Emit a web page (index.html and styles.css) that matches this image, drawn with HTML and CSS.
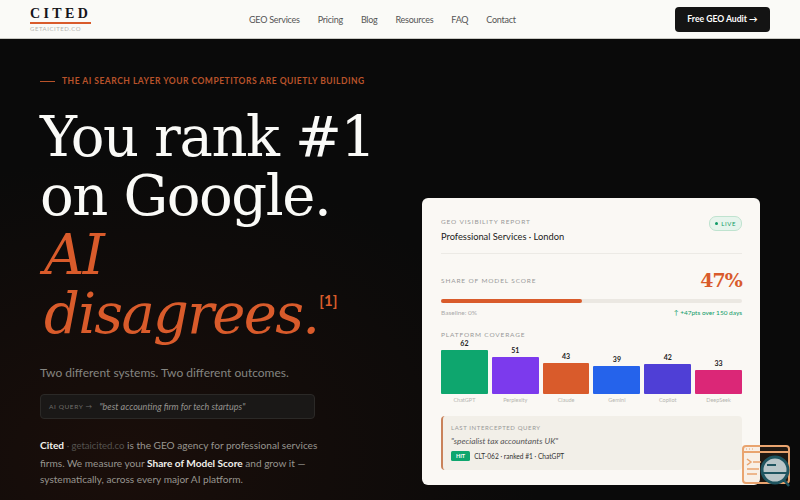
FILE: index.html
```html
<!DOCTYPE html>
<html lang="en">
<head>
    <meta charset="UTF-8">
    <meta name="viewport" content="width=device-width, initial-scale=1.0">
    <title>Cited - GEO Agency</title>
    <link rel="stylesheet" href="styles.css">
</head>
<body>
    <div class="header">
        <div class="logo">
            <div class="logo-name">CITED</div>
            <div class="logo-url">GETAICITED.CO</div>
        </div>
        <div class="nav">
            <a href="#">GEO Services</a>
            <a href="#">Pricing</a>
            <a href="#">Blog</a>
            <a href="#">Resources</a>
            <a href="#">FAQ</a>
            <a href="#">Contact</a>
        </div>
        <a class="cta" href="#">Free GEO Audit →</a>
    </div>
    <div class="hero">
        <div class="hero-left">
            <div class="eyebrow"><span class="eyebrow-line"></span>THE AI SEARCH LAYER YOUR COMPETITORS ARE QUIETLY BUILDING</div>
            <h1>You rank #1<br>on Google.<em>AI<br>disagrees.<sup>[1]</sup></em></h1>
            <p class="sub">Two different systems. Two different outcomes.</p>
            <div class="query">
                <span class="query-label">AI QUERY →</span>
                <span class="query-text">"best accounting firm for tech startups"</span>
            </div>
            <p class="intro"><strong>Cited</strong> <span class="intro-url">· getaicited.co</span> is the GEO agency for professional services firms. We measure your <strong>Share of Model Score</strong> and grow it — systematically, across every major AI platform.</p>
        </div>
        <div class="card">
            <div class="card-top">
                <div>
                    <div class="card-label">GEO VISIBILITY REPORT</div>
                    <div class="card-title">Professional Services · London</div>
                </div>
                <span class="live"><span class="live-dot"></span>LIVE</span>
            </div>
            <div class="score-row">
                <span class="card-label">SHARE OF MODEL SCORE</span>
                <span class="score">47%</span>
            </div>
            <div class="track"><div class="fill" style="width: 47%"></div></div>
            <div class="track-notes">
                <span>Baseline: 0%</span>
                <span class="gain">↑ +47pts over 150 days</span>
            </div>
            <div class="card-label coverage">PLATFORM COVERAGE</div>
            <div class="bars">
                <div class="bar-col"><b>62</b><div class="bar" style="height: 44px; background: #0ea66e"></div><span>ChatGPT</span></div>
                <div class="bar-col"><b>51</b><div class="bar" style="height: 37px; background: #7c3aed"></div><span>Perplexity</span></div>
                <div class="bar-col"><b>43</b><div class="bar" style="height: 31px; background: #d95b2b"></div><span>Claude</span></div>
                <div class="bar-col"><b>39</b><div class="bar" style="height: 28px; background: #2563eb"></div><span>Gemini</span></div>
                <div class="bar-col"><b>42</b><div class="bar" style="height: 30px; background: #4f3fd6"></div><span>Copilot</span></div>
                <div class="bar-col"><b>33</b><div class="bar" style="height: 24px; background: #db2777"></div><span>DeepSeek</span></div>
            </div>
            <div class="last">
                <div class="card-label last-label">LAST INTERCEPTED QUERY</div>
                <div class="last-query">"specialist tax accountants UK"</div>
                <div class="last-row"><span class="hit">HIT</span>CLT-062 · ranked #1 · ChatGPT</div>
            </div>
        </div>
    </div>
    <!-- floating widget -->
    <svg class="widget" width="50" height="44" viewBox="0 0 50 44" fill="none">
        <rect x="2" y="2" width="46" height="37" rx="3" fill="#e9a46f" fill-opacity="0.1" stroke="#e9a46f" stroke-width="2"/>
        <path d="M2 8h46" stroke="#e9a46f" stroke-width="2"/>
        <path d="M5 5h1M8 5h1M11 5h1" stroke="#e9a46f"/>
        <path d="M6 15l4 3-4 3M12 18h8M6 25h12M6 30h10" stroke="#e9a46f" stroke-width="1.5"/>
        <circle cx="34" cy="26" r="13" fill="#b9c6c8" stroke="#1f5560" stroke-width="3"/>
        <path d="M26 21h9M22 29h24" stroke="#1f5560" stroke-width="2"/>
        <path d="M43 36l5 6" stroke="#1f5560" stroke-width="2.5"/>
    </svg>
</body>
</html>
```

FILE: styles.css
```css
/* Global styles */
html, body {
    height: 100%;
}
body {
    margin: 0;
    font-family: 'Lato', sans-serif;
    background: #0a0a0a;
    overflow: hidden;
    position: relative;
}

/* Header */
.header {
    height: 39px;
    box-sizing: border-box;
    background: #fafaf7;
    border-bottom: 1px solid #c9c9c4;
    display: flex;
    align-items: center;
    padding: 0 30px;
}
.logo {
    width: 170px;
    padding-top: 2px;
}
.logo-name {
    font-family: 'Liberation Serif', serif;
    font-weight: 700;
    font-size: 14px;
    line-height: 13px;
    letter-spacing: 3.4px;
    color: #15151a;
    border-bottom: 2px solid #d95b2b;
    width: 61px;
    padding-bottom: 2px;
}
.logo-url {
    font-size: 6px;
    line-height: 9px;
    letter-spacing: 0.55px;
    color: #b5b5b0;
}
.nav {
    display: flex;
    gap: 18px;
    margin-left: 49px;
}
.nav a {
    font-size: 9px;
    letter-spacing: -0.25px;
    color: #555;
    text-decoration: none;
}
.cta {
    margin-left: auto;
    background: #141414;
    color: #fff;
    font-size: 8.6px;
    font-weight: 700;
    text-decoration: none;
    border-radius: 4px;
    width: 95px;
    height: 25px;
    display: flex;
    align-items: center;
    justify-content: center;
}

/* Hero */
.hero {
    height: 461px;
    padding: 0 40px;
    display: flex;
    justify-content: space-between;
    background: radial-gradient(ellipse 420px 300px at 120px 420px, #1a0e0a, transparent);
}
.hero-left {
    width: 345px;
    padding-top: 37px;
}
.eyebrow {
    display: flex;
    align-items: center;
    gap: 7px;
    font-size: 8.5px;
    font-weight: 700;
    letter-spacing: 0.5px;
    color: #b9532a;
    white-space: nowrap;
}
.eyebrow-line {
    width: 15px;
    height: 1px;
    background: #b9532a;
}
h1 {
    margin: 21px 0 0;
    font-family: 'DejaVu Serif', serif;
    font-weight: 400;
    font-size: 56px;
    line-height: 59px;
    letter-spacing: -1.4px;
    color: #fafaf7;
    white-space: nowrap;
}
h1 em {
    display: block;
    padding-left: 4px;
    letter-spacing: -1.7px;
    color: #d95b2b;
}
h1 sup {
    font-family: 'Lato', sans-serif;
    font-style: normal;
    font-weight: 700;
    font-size: 15px;
    line-height: 0;
    letter-spacing: 0;
    color: #d95b2b;
    vertical-align: 27px;
    margin-left: 1px;
}
.sub {
    margin: 22px 0 0;
    font-size: 12px;
    line-height: 16px;
    color: #858581;
}
.query {
    margin-top: 13px;
    width: 275px;
    height: 25px;
    box-sizing: border-box;
    background: #1a1817;
    border: 1px solid #2b2927;
    border-radius: 4px;
    padding: 0 8px;
    display: flex;
    align-items: center;
    gap: 7px;
}
.query-label {
    font-size: 6.5px;
    letter-spacing: 0.6px;
    color: #6f6d6a;
}
.query-text {
    font-size: 9px;
    font-style: italic;
    color: #94928e;
}
.intro {
    margin: 18px 0 0;
    width: 285px;
    font-size: 10.1px;
    line-height: 16.5px;
    color: #97958f;
}
.intro strong {
    color: #f2f1ec;
    font-weight: 700;
}
.intro-url {
    font-size: 9.5px;
    color: #55534f;
}

/* Report card */
.card {
    align-self: flex-start;
    margin-top: 159px;
    width: 338px;
    height: 287px;
    box-sizing: border-box;
    background: #faf8f4;
    border-radius: 6px;
    padding: 19px 18px 0 19px;
}
.card-top {
    display: flex;
    justify-content: space-between;
    align-items: flex-start;
    padding-bottom: 9px;
    border-bottom: 1px solid #eceae5;
}
.card-label {
    font-size: 6.5px;
    line-height: 9px;
    letter-spacing: 0.85px;
    color: #999;
}
.card-title {
    margin-top: 4px;
    font-size: 9.3px;
    line-height: 14px;
    font-weight: 400;
    color: #1a1a1a;
}
.live {
    display: flex;
    align-items: center;
    gap: 3px;
    height: 13px;
    margin-top: -1px;
    padding: 0 5px;
    background: #e6f4ec;
    border: 1px solid #bfe3cf;
    border-radius: 7px;
    font-size: 6px;
    letter-spacing: 0.6px;
    color: #0e9a66;
}
.live-dot {
    width: 3px;
    height: 3px;
    border-radius: 50%;
    background: #0e9a66;
}
.score-row {
    margin-top: 14px;
    display: flex;
    justify-content: space-between;
    align-items: center;
}
.score {
    font-family: 'DejaVu Serif', serif;
    font-weight: 700;
    font-size: 19px;
    line-height: 24px;
    letter-spacing: -0.9px;
    color: #d95b2b;
}
.track {
    margin-top: 7px;
    height: 4px;
    border-radius: 2px;
    background: #ebe8e2;
}
.fill {
    height: 100%;
    border-radius: 2px;
    background: #d95b2b;
}
.track-notes {
    margin-top: 5px;
    display: flex;
    justify-content: space-between;
    font-size: 6.5px;
    line-height: 9px;
    color: #aaa;
}
.gain {
    color: #0e9a66;
}
.coverage {
    margin-top: 13px;
}
.bars {
    display: flex;
    gap: 4px;
    align-items: flex-end;
    height: 55px;
}
.bar-col {
    flex: 1;
    display: flex;
    flex-direction: column;
    align-items: center;
    position: relative;
}
.bar-col b {
    font-size: 7px;
    line-height: 10px;
    margin-bottom: 2px;
    font-weight: 700;
    color: #222;
}
.bar {
    width: 100%;
    border-radius: 1px;
}
.bar-col span {
    position: absolute;
    top: 100%;
    margin-top: 2px;
    font-size: 5.5px;
    line-height: 8px;
    color: #b5b5b0;
}
.last {
    margin-top: 22px;
    height: 54px;
    box-sizing: border-box;
    background: #f2efe8;
    border-left: 2px solid #c9825a;
    border-radius: 4px;
    padding: 7px 8px;
}
.last-label {
    font-size: 6px;
    letter-spacing: 0.6px;
}
.last-query {
    margin-top: 3px;
    font-size: 8.3px;
    line-height: 12px;
    font-style: italic;
    color: #555;
}
.last-row {
    margin-top: 4px;
    display: flex;
    align-items: center;
    gap: 4px;
    font-size: 6.6px;
    color: #333;
}
.hit {
    background: #0ea66e;
    color: #fff;
    font-size: 5.5px;
    font-weight: 700;
    padding: 2px 5px;
    border-radius: 1.5px;
}

/* Floating widget */
.widget {
    position: absolute;
    right: 9px;
    bottom: 12px;
}
```
